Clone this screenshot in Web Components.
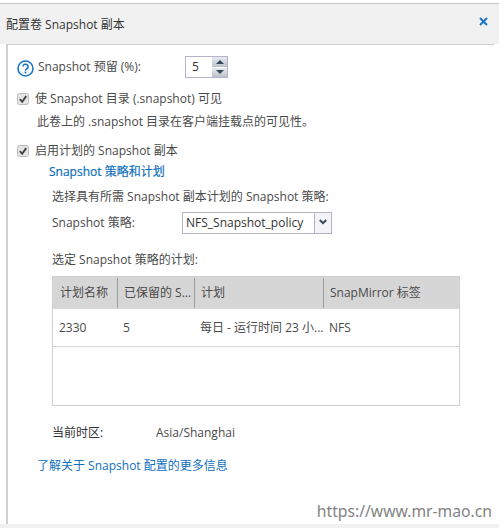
<!DOCTYPE html>
<html lang="zh">
<head>
<meta charset="utf-8">
<title>配置卷 Snapshot 副本</title>
<style>
  html, body { margin: 0; padding: 0; background: #fff; }
  body { font: 12px/16px "Open Sans", "Noto Sans CJK SC", sans-serif; color: #4a4a4a; width: 499px; height: 528px; overflow: hidden; position: relative; }
</style>
</head>
<body>
<snap-dialog heading="配置卷 Snapshot 副本">
  <reserve-row></reserve-row>
  <check-row style="margin-top:13px" label="使 Snapshot 目录 (.snapshot) 可见"></check-row>
  <div style="margin:7px 0 0 20px;height:16px">此卷上的 .snapshot 目录在客户端挂载点的可见性。</div>
  <check-row style="margin-top:13px" label="启用计划的 Snapshot 副本"></check-row>
  <policy-section></policy-section>
</snap-dialog>
<water-mark>https://www.mr-mao.cn</water-mark>

<script>
class SnapDialog extends HTMLElement {
  constructor() {
    super();
    this.attachShadow({ mode: 'open' });
  }

  connectedCallback() {
    this.shadowRoot.innerHTML = `
      <style>
        :host { display: flex; flex-direction: column; height: 528px; padding-top: 3px; box-sizing: border-box; }
        header {
          height: 41px; flex: none; box-sizing: border-box; padding: 2px 11px 0 6px;
          background: #f1f1f1; border-top: 1px solid #c4c4c4;
          display: flex; align-items: center; justify-content: space-between;
          color: #333;
        }
        svg { display: block; margin-top: -8px; }
        main {
          flex: 1; margin-left: 6px; margin-right: 5px; padding: 11px 0 0 9px;
          border-left: 2px solid #d0d0d0; border-top: 1px solid #d0d0d0;
        }
        footer { height: 4px; flex: none; background: #f1f1f1; }
      </style>
      <header>
        <span>${this.getAttribute('heading')}</span>
        <svg width="9" height="9" viewBox="0 0 9 9"><path d="M1 1l7 7M8 1l-7 7" stroke="#1a76c8" stroke-width="2"/></svg>
      </header>
      <main><slot></slot></main>
      <footer></footer>
    `;
  }
}

class ReserveRow extends HTMLElement {
  constructor() {
    super();
    this.attachShadow({ mode: 'open' });
  }

  connectedCallback() {
    this.shadowRoot.innerHTML = `
      <style>
        :host { display: flex; align-items: center; height: 22px; }
        .help { flex: none; margin: 2px 4px 0 0; display: block; }
        .label { width: 147px; flex: none; }
        .spin { display: flex; width: 43px; height: 22px; box-sizing: border-box; border: 1px solid #b4b4c8; }
        .value { flex: 1; padding-left: 6px; line-height: 20px; color: #333; }
        .btns { width: 15px; flex: none; display: flex; flex-direction: column; gap: 1px; background: #fff; }
        .btns div { flex: 1; display: flex; align-items: center; justify-content: center; background: linear-gradient(#e8ecf0, #b9c1ca); }
        .btns i { width: 0; height: 0; border-left: 4px solid transparent; border-right: 4px solid transparent; }
        .up { border-bottom: 4px solid #34495e; }
        .down { border-top: 4px solid #34495e; }
      </style>
      <svg class="help" width="17" height="17" viewBox="0 0 17 17">
        <circle cx="8.5" cy="8.5" r="7.5" fill="#fff" stroke="#1a76c8" stroke-width="1.6"/>
        <path d="M5.9 6.6a2.6 2.4 0 1 1 3.9 2.1c-.9.5-1.3.9-1.3 2" fill="none" stroke="#1a76c8" stroke-width="1.6"/>
        <rect x="7.6" y="11.6" width="1.8" height="1.8" fill="#1a76c8"/>
      </svg>
      <span class="label">Snapshot 预留 (%):</span>
      <div class="spin">
        <div class="value">5</div>
        <div class="btns"><div><i class="up"></i></div><div><i class="down"></i></div></div>
      </div>
    `;
  }
}

class CheckRow extends HTMLElement {
  constructor() {
    super();
    this.attachShadow({ mode: 'open' });
  }

  connectedCallback() {
    this.shadowRoot.innerHTML = `
      <style>
        :host { display: flex; align-items: center; height: 16px; gap: 6px; }
        svg { flex: none; display: block; }
      </style>
      <svg width="12" height="12" viewBox="0 0 12 12">
        <rect x=".5" y=".5" width="11" height="11" rx="2" fill="#e4e4e4" stroke="#bdbdbd"/>
        <path d="M2.8 6.2l2.4 2.5 4-5.6" fill="none" stroke="#444" stroke-width="1.9"/>
      </svg>
      <span>${this.getAttribute('label')}</span>
    `;
  }
}

class PolicySection extends HTMLElement {
  constructor() {
    super();
    this.attachShadow({ mode: 'open' });
  }

  connectedCallback() {
    this.shadowRoot.innerHTML = `
      <style>
        :host { display: block; margin: 5px 0 0 32px; }
        a { color: #0f6fc0; text-decoration: none; }
        .title { color: #0f6fc0; height: 16px; -webkit-text-stroke: .2px #0f6fc0; }
        .body { padding-left: 3px; }
        .intro { margin-top: 9px; }
        .pick { display: flex; align-items: center; margin-top: 7px; }
        .pick > span { width: 130px; flex: none; }
        .select { display: flex; width: 150px; height: 22px; box-sizing: border-box; border: 1px solid #b4b4c8; }
        .select div:first-child { flex: 1; padding-left: 3px; line-height: 20px; color: #333; }
        .arrow { width: 17px; flex: none; border-left: 1px solid #b4b4c8; display: flex; justify-content: center; padding-top: 6px; box-sizing: border-box; background: #f4f4f6; }
        .zone-label { margin-top: 18px; }
        .zone { display: flex; margin-top: 19px; }
        .zone span:first-child { width: 104px; color: #333; }
        .more { display: block; margin: 17px 0 0 -12px; }
        svg { display: block; }
      </style>
      <div class="title">Snapshot 策略和计划</div>
      <div class="body">
        <div class="intro">选择具有所需 Snapshot 副本计划的 Snapshot 策略:</div>
        <div class="pick">
          <span>Snapshot 策略:</span>
          <div class="select">
            <div>NFS_Snapshot_policy</div>
            <div class="arrow"><svg width="8" height="6" viewBox="0 0 8 6"><path d="M.8 1l3.2 3.2L7.2 1" fill="none" stroke="#34495e" stroke-width="2"/></svg></div>
          </div>
        </div>
        <div class="zone-label">选定 Snapshot 策略的计划:</div>
        <schedule-table></schedule-table>
        <div class="zone"><span>当前时区:</span><span>Asia/Shanghai</span></div>
      </div>
      <a class="more" href="#">了解关于 Snapshot 配置的更多信息</a>
    `;
  }
}

class ScheduleTable extends HTMLElement {
  constructor() {
    super();
    this.attachShadow({ mode: 'open' });
  }

  connectedCallback() {
    const cols = '64px 77px 129px 1fr';
    this.shadowRoot.innerHTML = `
      <style>
        :host { display: block; width: 408px; height: 130px; margin-top: 8px; box-sizing: border-box; border: 1px solid #cfcfcf; }
        .row { display: grid; grid-template-columns: ${cols}; }
        .head { height: 32px; background: #d6d6d6; align-items: center; }
        .head div { height: 30px; line-height: 30px; padding-left: 6px; box-sizing: border-box; border-left: 1px solid #9d9d9d; white-space: nowrap; overflow: hidden; }
        .head div:first-child { border-left: 0; padding-left: 7px; }
        .cells { height: 38px; box-sizing: border-box; border-bottom: 1px solid #d6d6d6; align-items: center; }
        .cells div { padding-left: 6px; white-space: nowrap; overflow: hidden; }
      </style>
      <div class="row head"><div>计划名称</div><div>已保留的 S...</div><div>计划</div><div>SnapMirror 标签</div></div>
      <div class="row cells"><div>2330</div><div>5</div><div>每日 - 运行时间 23 小...</div><div>NFS</div></div>
    `;
  }
}

class WaterMark extends HTMLElement {
  constructor() {
    super();
    this.attachShadow({ mode: 'open' });
    this.shadowRoot.innerHTML = `
      <style>
        :host { position: absolute; right: 7px; bottom: 7px; color: #7f8484; font: 400 15.7px/20px "Noto Sans", "Open Sans", sans-serif; }
      </style>
      <slot></slot>
    `;
  }
}

customElements.define('snap-dialog', SnapDialog);
customElements.define('reserve-row', ReserveRow);
customElements.define('check-row', CheckRow);
customElements.define('schedule-table', ScheduleTable);
customElements.define('policy-section', PolicySection);
customElements.define('water-mark', WaterMark);
</script>
</body>
</html>
